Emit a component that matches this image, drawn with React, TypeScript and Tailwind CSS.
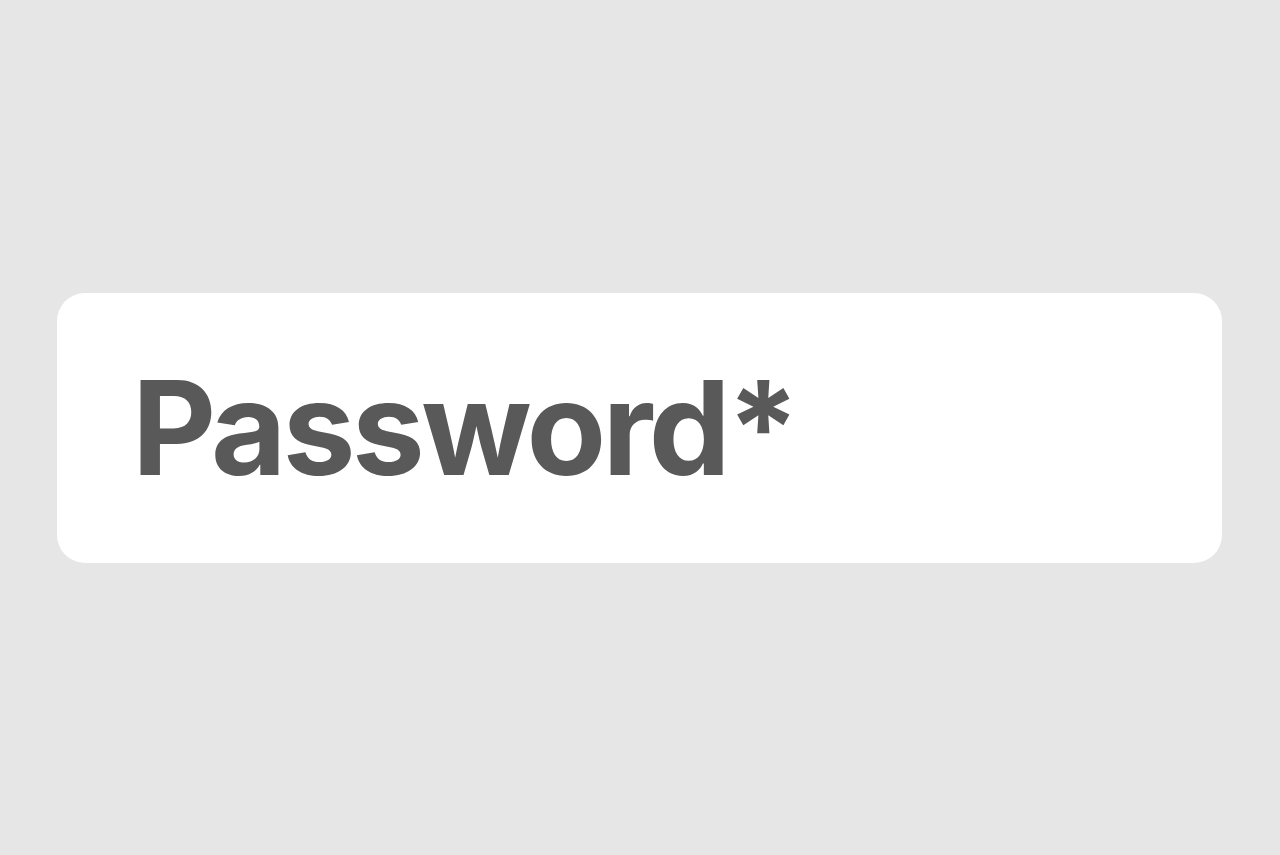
export default function App() {
  return (
    <div className="w-[1280px] h-[855px] bg-[#e6e6e6] flex items-center">
      <div className="ml-[57px] w-[1165px] h-[270px] bg-white rounded-[28px] flex items-center pl-[75px]">
        <span
          className="text-[130px] font-bold text-[#595959] leading-none tracking-[-3.6px]"
          style={{ fontFamily: 'Inter, "Liberation Sans", sans-serif' }}
        >
          Password*
        </span>
      </div>
    </div>
  );
}
